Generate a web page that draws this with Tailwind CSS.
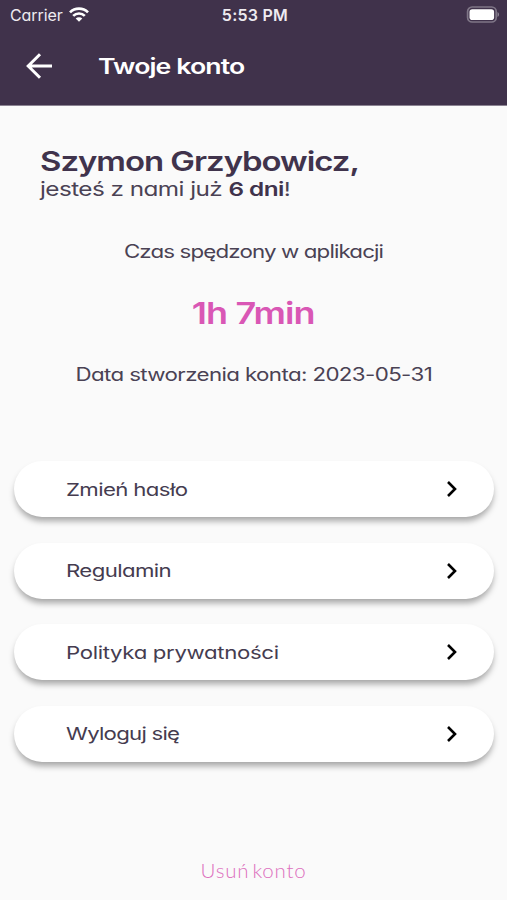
<!DOCTYPE html>
<html lang="pl">
<head>
    <meta charset="UTF-8">
    <meta name="viewport" content="width=device-width, initial-scale=1.0">
    <title>Twoje konto</title>
    <script src="https://cdn.jsdelivr.net/npm/@tailwindcss/browser@4"></script>
</head>
<body class="bg-[#fafafa] text-[#40334c] h-[900px] overflow-hidden font-['Inter',sans-serif] [font-feature-settings:'cv11'] whitespace-nowrap">
    <header class="h-[106px] bg-[#40324b] text-white border-b border-[#8b8392]">
        <!-- Status bar -->
        <div class="h-[30px] pl-[10px] pr-[7px] grid grid-cols-3 items-center text-[16px] text-[#eeebf0]">
            <div class="flex items-center gap-[6px]">
                <span class="tracking-[-0.1px]">Carrier</span>
                <svg class="w-[20px] h-[15px] -mt-[2px]" viewBox="0 0 20 15" fill="none" stroke="white" stroke-width="2.7">
                    <path d="M1 5.4a12.8 12.8 0 0 1 18 0"/>
                    <path d="M4.2 8.9a8.2 8.2 0 0 1 11.6 0"/>
                    <path d="M10 14.8L6.7 11.6a4.7 4.7 0 0 1 6.6 0z" fill="white" stroke="none"/>
                </svg>
            </div>
            <span class="text-center font-semibold tracking-[0.25px]">5:53 PM</span>
            <svg class="justify-self-end w-[34px] h-[17px] -mt-[2px]" viewBox="0 0 34 17">
                <rect x="1.6" y="1" width="28.6" height="15" rx="4.5" fill="none" stroke="#7f7687" stroke-width="1.7"/>
                <rect x="3.5" y="3.2" width="24.6" height="10.8" rx="2.8" fill="white"/>
                <path d="M31.5 6v5q1.6-.7 1.6-2.5t-1.6-2.5z" fill="#8c8493"/>
            </svg>
        </div>
        <div class="h-[72px] pl-[26px] flex items-center gap-[46px]">
            <svg class="w-[26px] h-[26px]" viewBox="0 0 26 26" fill="none" stroke="white" stroke-width="3">
                <path d="M26 13H2.5M14 1.2L2.2 13L14 24.8"/>
            </svg>
            <h1 class="mt-[2px] text-[21px] leading-7 font-semibold tracking-[-0.7px] origin-left scale-x-[1.27]">Twoje konto</h1>
        </div>
    </header>

    <main>
        <section class="pt-[42px] pl-[40px]">
            <h2 class="w-fit text-[27px] leading-7 font-semibold tracking-[-0.85px] origin-left scale-x-[1.22]">Szymon Grzybowicz,</h2>
            <p class="w-fit text-[19px] leading-7 text-[#4a4254] tracking-[-0.44px] origin-left scale-x-[1.28]">jesteś z nami już <b class="font-semibold text-[#40334c]">6 dni</b>!</p>
        </section>

        <section class="mt-[36px] flex flex-col items-center text-[18px] leading-6 text-[#4a4254]">
            <p class="tracking-[-0.7px] scale-x-[1.24]">Czas spędzony w aplikacji</p>
            <p class="mt-[31px] text-[30px] leading-9 font-semibold text-[#d957b5] tracking-[-0.75px] scale-x-[1.2]">1h 7min</p>
            <p class="mt-[32px] tracking-[-0.5px] scale-x-[1.24]">Data stworzenia konta: 2023-05-31</p>
        </section>

        <!-- Menu -->
        <nav class="mt-[74px] ml-[14px] mr-[13px] flex flex-col gap-[25.5px] text-[17.5px] text-[#453c50]">
            <a class="h-14 pl-[52px] pr-[36px] flex items-center justify-between rounded-full bg-white shadow-[0_5px_6px_-1px_rgba(0,0,0,0.34)]">
                <span class="mt-[2px] tracking-[-0.5px] origin-left scale-x-[1.27]">Zmień hasło</span>
                <svg class="w-[12px] h-[18px]" viewBox="0 0 12 18" fill="none" stroke="black" stroke-width="2.6"><path d="M2 2L9 9L2 16"/></svg>
            </a>
            <a class="h-14 pl-[52px] pr-[36px] flex items-center justify-between rounded-full bg-white shadow-[0_5px_6px_-1px_rgba(0,0,0,0.34)]">
                <span class="mt-[1px] tracking-[-0.5px] origin-left scale-x-[1.27]">Regulamin</span>
                <svg class="w-[12px] h-[18px]" viewBox="0 0 12 18" fill="none" stroke="black" stroke-width="2.6"><path d="M2 2L9 9L2 16"/></svg>
            </a>
            <a class="h-14 pl-[52px] pr-[36px] flex items-center justify-between rounded-full bg-white shadow-[0_5px_6px_-1px_rgba(0,0,0,0.34)]">
                <span class="mt-[2px] tracking-[-0.28px] origin-left scale-x-[1.27]">Polityka prywatności</span>
                <svg class="w-[12px] h-[18px]" viewBox="0 0 12 18" fill="none" stroke="black" stroke-width="2.6"><path d="M2 2L9 9L2 16"/></svg>
            </a>
            <a class="h-14 pl-[52px] pr-[36px] flex items-center justify-between rounded-full bg-white shadow-[0_5px_6px_-1px_rgba(0,0,0,0.34)]">
                <span class="mt-[1px] tracking-[-0.6px] origin-left scale-x-[1.27]">Wyloguj się</span>
                <svg class="w-[12px] h-[18px]" viewBox="0 0 12 18" fill="none" stroke="black" stroke-width="2.6"><path d="M2 2L9 9L2 16"/></svg>
            </a>
        </nav>

        <p class="mt-[94px] text-center font-['Lato',sans-serif] font-light text-[20.5px] leading-7 tracking-[0.75px] [word-spacing:-3px] text-[#dd70be]">Usuń konto</p>
    </main>
</body>
</html>
